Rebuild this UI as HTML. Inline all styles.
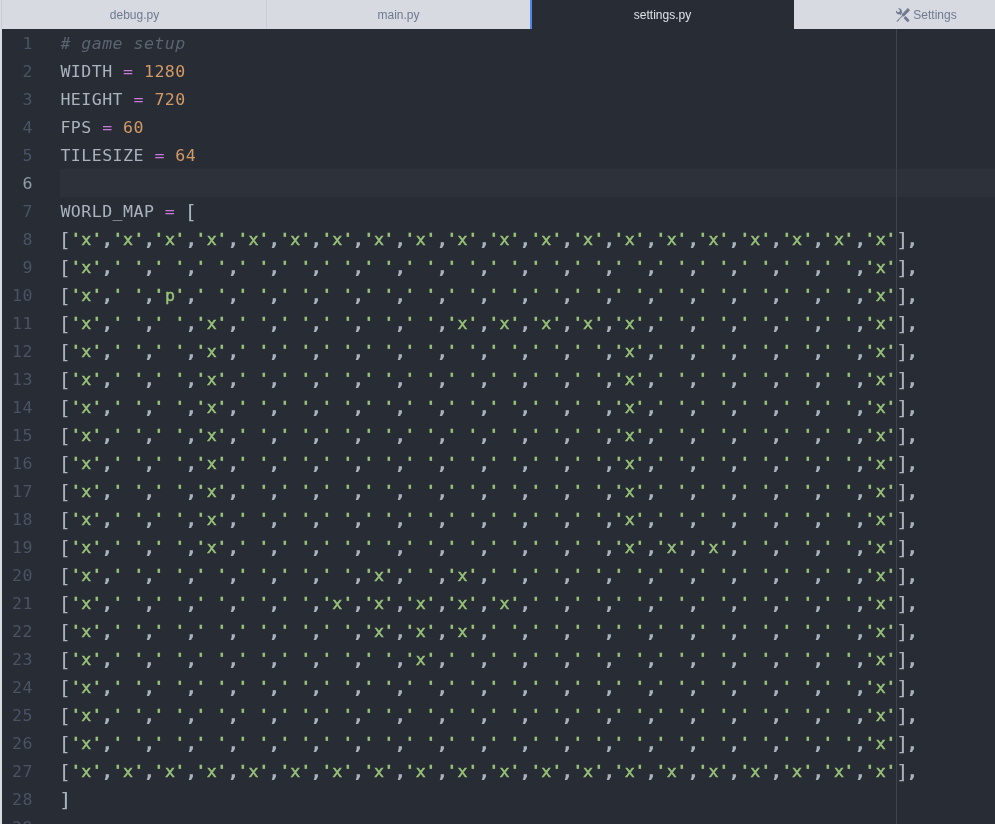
<!DOCTYPE html>
<html><head><meta charset="utf-8"><title>settings.py</title>
<style>
html,body{margin:0;padding:0;}
body{width:995px;height:824px;overflow:hidden;background:#282c34;position:relative;font-family:"Liberation Sans",sans-serif;}
#strip{position:absolute;left:0;top:0;width:2px;height:824px;background:#d9dce2;}
#strip:after{content:"";position:absolute;left:1px;top:0;width:1px;height:29px;background:#c9cdd5;}
#tabbg{position:absolute;left:2px;top:0;width:993px;height:29px;background:#d7dae0;}
#tabbg i{position:absolute;top:0;height:28px;width:1px;background:#c9cdd5;}
#tabbg b{position:absolute;left:528px;top:0;width:264px;height:29px;background:#282c34;border-left:2px solid #5085ee;box-sizing:border-box;}
#tabs{position:absolute;left:2px;top:0;width:993px;height:29px;overflow:hidden;font-size:12px;color:#6f7a90;will-change:transform;}
.tab{position:absolute;top:0;height:29px;width:264px;line-height:30px;text-align:center;box-sizing:border-box;padding-left:1px;white-space:nowrap;}
.tab.active{color:#dfe2e8;}
.tab svg{position:absolute;left:102.4px;top:8px;}
#ed{position:absolute;left:2px;top:30px;width:993px;height:794px;overflow:hidden;font-family:"DejaVu Sans Mono",monospace;font-size:16.6px;letter-spacing:0.452px;line-height:28px;color:#abb2bf;will-change:transform;}
#ed div{height:28px;position:relative;}
#hl{position:absolute;left:60px;top:169px;width:935px;height:28px;background:#2c313a;}
#ed .n{position:absolute;left:0;top:0;width:31px;text-align:right;color:#4b5263;-webkit-text-stroke:0;}
#ed div.cur .n{color:#959ca9;}
#ed .t{position:absolute;left:58.4px;top:0;white-space:pre;}
#ed i{color:#5c6370;font-style:italic;}
#ed b{color:#c678dd;font-weight:normal;}
#ed u{color:#d19a66;text-decoration:none;}
#ed s{color:#98c379;text-decoration:none;-webkit-text-stroke:0.8px;}
#ed s a{display:inline-block;transform:scale(1.12,0.78);transform-origin:50% 3.7px;}
#ed .k{display:inline-block;transform:translate(0.7px,1px) scale(1.25,1.17);transform-origin:80% 14px;}
#ed .j{display:inline-block;transform:translate(-0.5px,1px) scale(1.3,1.17);transform-origin:20% 14px;}
#ed s tt{font:inherit;-webkit-text-stroke:0.45px;}
#ed em{font-style:normal;font-weight:bold;-webkit-text-stroke:0.1px;display:inline-block;transform:translate(0.7px,1px) scale(1.22,1.05);transform-origin:68% 15px;}
#guide{position:absolute;left:896px;top:29px;width:1px;height:795px;background:#3e434d;}
</style></head>
<body>
<div id="tabbg"><i style="left:264px"></i><b></b></div>
<div id="tabs">
<div class="tab" style="left:0">debug.py</div>
<div class="tab" style="left:264px">main.py</div>
<div class="tab active" style="left:528px">settings.py</div>
<div class="tab" style="left:792px;padding-left:18px"><svg width="14" height="14" viewBox="0 0 16 16"><path fill="#6f7a90" fill-rule="evenodd" d="M4.48 7.27c.26.26 1.28 1.33 1.28 1.33l.56-.58-.88-.91 1.69-1.8s-.76-.74-.43-.45c.32-1.19.03-2.51-.87-3.44C4.93.5 3.66.2 2.52.51l1.93 2-.51 1.96-1.89.52-1.93-2C-.19 4.17.1 5.48 1 6.4c.94.98 2.29 1.26 3.48.87zm6.44 1.94l-2.33 2.3 3.84 3.98c.31.33.73.49 1.14.49.41 0 .82-.16 1.14-.49.63-.65.63-1.7 0-2.35l-3.79-3.930zM16 2.53L13.550 0 6.330 7.460l.88.91-4.310 4.460-.99.53-1.390 2.270.35.37 2.200-1.440.51-1.020L7.900 9.080l.88.91L16 2.530z"/></svg>Settings</div>
</div>
<div id="strip"></div>
<div id="hl"></div>
<div id="ed">
<div><span class="n">1</span><span class="t"><i># game setup</i></span></div>
<div><span class="n">2</span><span class="t">WIDTH <b>=</b> <u>1280</u></span></div>
<div><span class="n">3</span><span class="t">HEIGHT <b>=</b> <u>720</u></span></div>
<div><span class="n">4</span><span class="t">FPS <b>=</b> <u>60</u></span></div>
<div><span class="n">5</span><span class="t">TILESIZE <b>=</b> <u>64</u></span></div>
<div class="cur"><span class="n">6</span><span class="t"></span></div>
<div><span class="n">7</span><span class="t">WORLD_MAP <b>=</b> <span class="k">[</span></span></div>
<div><span class="n">8</span><span class="t"><span class="k">[</span><s><a>'</a><tt>x</tt><a>'</a></s><em>,</em><s><a>'</a><tt>x</tt><a>'</a></s><em>,</em><s><a>'</a><tt>x</tt><a>'</a></s><em>,</em><s><a>'</a><tt>x</tt><a>'</a></s><em>,</em><s><a>'</a><tt>x</tt><a>'</a></s><em>,</em><s><a>'</a><tt>x</tt><a>'</a></s><em>,</em><s><a>'</a><tt>x</tt><a>'</a></s><em>,</em><s><a>'</a><tt>x</tt><a>'</a></s><em>,</em><s><a>'</a><tt>x</tt><a>'</a></s><em>,</em><s><a>'</a><tt>x</tt><a>'</a></s><em>,</em><s><a>'</a><tt>x</tt><a>'</a></s><em>,</em><s><a>'</a><tt>x</tt><a>'</a></s><em>,</em><s><a>'</a><tt>x</tt><a>'</a></s><em>,</em><s><a>'</a><tt>x</tt><a>'</a></s><em>,</em><s><a>'</a><tt>x</tt><a>'</a></s><em>,</em><s><a>'</a><tt>x</tt><a>'</a></s><em>,</em><s><a>'</a><tt>x</tt><a>'</a></s><em>,</em><s><a>'</a><tt>x</tt><a>'</a></s><em>,</em><s><a>'</a><tt>x</tt><a>'</a></s><em>,</em><s><a>'</a><tt>x</tt><a>'</a></s><span class="j">]</span><em>,</em></span></div>
<div><span class="n">9</span><span class="t"><span class="k">[</span><s><a>'</a><tt>x</tt><a>'</a></s><em>,</em><s><a>'</a> <a>'</a></s><em>,</em><s><a>'</a> <a>'</a></s><em>,</em><s><a>'</a> <a>'</a></s><em>,</em><s><a>'</a> <a>'</a></s><em>,</em><s><a>'</a> <a>'</a></s><em>,</em><s><a>'</a> <a>'</a></s><em>,</em><s><a>'</a> <a>'</a></s><em>,</em><s><a>'</a> <a>'</a></s><em>,</em><s><a>'</a> <a>'</a></s><em>,</em><s><a>'</a> <a>'</a></s><em>,</em><s><a>'</a> <a>'</a></s><em>,</em><s><a>'</a> <a>'</a></s><em>,</em><s><a>'</a> <a>'</a></s><em>,</em><s><a>'</a> <a>'</a></s><em>,</em><s><a>'</a> <a>'</a></s><em>,</em><s><a>'</a> <a>'</a></s><em>,</em><s><a>'</a> <a>'</a></s><em>,</em><s><a>'</a> <a>'</a></s><em>,</em><s><a>'</a><tt>x</tt><a>'</a></s><span class="j">]</span><em>,</em></span></div>
<div><span class="n">10</span><span class="t"><span class="k">[</span><s><a>'</a><tt>x</tt><a>'</a></s><em>,</em><s><a>'</a> <a>'</a></s><em>,</em><s><a>'</a><tt>p</tt><a>'</a></s><em>,</em><s><a>'</a> <a>'</a></s><em>,</em><s><a>'</a> <a>'</a></s><em>,</em><s><a>'</a> <a>'</a></s><em>,</em><s><a>'</a> <a>'</a></s><em>,</em><s><a>'</a> <a>'</a></s><em>,</em><s><a>'</a> <a>'</a></s><em>,</em><s><a>'</a> <a>'</a></s><em>,</em><s><a>'</a> <a>'</a></s><em>,</em><s><a>'</a> <a>'</a></s><em>,</em><s><a>'</a> <a>'</a></s><em>,</em><s><a>'</a> <a>'</a></s><em>,</em><s><a>'</a> <a>'</a></s><em>,</em><s><a>'</a> <a>'</a></s><em>,</em><s><a>'</a> <a>'</a></s><em>,</em><s><a>'</a> <a>'</a></s><em>,</em><s><a>'</a> <a>'</a></s><em>,</em><s><a>'</a><tt>x</tt><a>'</a></s><span class="j">]</span><em>,</em></span></div>
<div><span class="n">11</span><span class="t"><span class="k">[</span><s><a>'</a><tt>x</tt><a>'</a></s><em>,</em><s><a>'</a> <a>'</a></s><em>,</em><s><a>'</a> <a>'</a></s><em>,</em><s><a>'</a><tt>x</tt><a>'</a></s><em>,</em><s><a>'</a> <a>'</a></s><em>,</em><s><a>'</a> <a>'</a></s><em>,</em><s><a>'</a> <a>'</a></s><em>,</em><s><a>'</a> <a>'</a></s><em>,</em><s><a>'</a> <a>'</a></s><em>,</em><s><a>'</a><tt>x</tt><a>'</a></s><em>,</em><s><a>'</a><tt>x</tt><a>'</a></s><em>,</em><s><a>'</a><tt>x</tt><a>'</a></s><em>,</em><s><a>'</a><tt>x</tt><a>'</a></s><em>,</em><s><a>'</a><tt>x</tt><a>'</a></s><em>,</em><s><a>'</a> <a>'</a></s><em>,</em><s><a>'</a> <a>'</a></s><em>,</em><s><a>'</a> <a>'</a></s><em>,</em><s><a>'</a> <a>'</a></s><em>,</em><s><a>'</a> <a>'</a></s><em>,</em><s><a>'</a><tt>x</tt><a>'</a></s><span class="j">]</span><em>,</em></span></div>
<div><span class="n">12</span><span class="t"><span class="k">[</span><s><a>'</a><tt>x</tt><a>'</a></s><em>,</em><s><a>'</a> <a>'</a></s><em>,</em><s><a>'</a> <a>'</a></s><em>,</em><s><a>'</a><tt>x</tt><a>'</a></s><em>,</em><s><a>'</a> <a>'</a></s><em>,</em><s><a>'</a> <a>'</a></s><em>,</em><s><a>'</a> <a>'</a></s><em>,</em><s><a>'</a> <a>'</a></s><em>,</em><s><a>'</a> <a>'</a></s><em>,</em><s><a>'</a> <a>'</a></s><em>,</em><s><a>'</a> <a>'</a></s><em>,</em><s><a>'</a> <a>'</a></s><em>,</em><s><a>'</a> <a>'</a></s><em>,</em><s><a>'</a><tt>x</tt><a>'</a></s><em>,</em><s><a>'</a> <a>'</a></s><em>,</em><s><a>'</a> <a>'</a></s><em>,</em><s><a>'</a> <a>'</a></s><em>,</em><s><a>'</a> <a>'</a></s><em>,</em><s><a>'</a> <a>'</a></s><em>,</em><s><a>'</a><tt>x</tt><a>'</a></s><span class="j">]</span><em>,</em></span></div>
<div><span class="n">13</span><span class="t"><span class="k">[</span><s><a>'</a><tt>x</tt><a>'</a></s><em>,</em><s><a>'</a> <a>'</a></s><em>,</em><s><a>'</a> <a>'</a></s><em>,</em><s><a>'</a><tt>x</tt><a>'</a></s><em>,</em><s><a>'</a> <a>'</a></s><em>,</em><s><a>'</a> <a>'</a></s><em>,</em><s><a>'</a> <a>'</a></s><em>,</em><s><a>'</a> <a>'</a></s><em>,</em><s><a>'</a> <a>'</a></s><em>,</em><s><a>'</a> <a>'</a></s><em>,</em><s><a>'</a> <a>'</a></s><em>,</em><s><a>'</a> <a>'</a></s><em>,</em><s><a>'</a> <a>'</a></s><em>,</em><s><a>'</a><tt>x</tt><a>'</a></s><em>,</em><s><a>'</a> <a>'</a></s><em>,</em><s><a>'</a> <a>'</a></s><em>,</em><s><a>'</a> <a>'</a></s><em>,</em><s><a>'</a> <a>'</a></s><em>,</em><s><a>'</a> <a>'</a></s><em>,</em><s><a>'</a><tt>x</tt><a>'</a></s><span class="j">]</span><em>,</em></span></div>
<div><span class="n">14</span><span class="t"><span class="k">[</span><s><a>'</a><tt>x</tt><a>'</a></s><em>,</em><s><a>'</a> <a>'</a></s><em>,</em><s><a>'</a> <a>'</a></s><em>,</em><s><a>'</a><tt>x</tt><a>'</a></s><em>,</em><s><a>'</a> <a>'</a></s><em>,</em><s><a>'</a> <a>'</a></s><em>,</em><s><a>'</a> <a>'</a></s><em>,</em><s><a>'</a> <a>'</a></s><em>,</em><s><a>'</a> <a>'</a></s><em>,</em><s><a>'</a> <a>'</a></s><em>,</em><s><a>'</a> <a>'</a></s><em>,</em><s><a>'</a> <a>'</a></s><em>,</em><s><a>'</a> <a>'</a></s><em>,</em><s><a>'</a><tt>x</tt><a>'</a></s><em>,</em><s><a>'</a> <a>'</a></s><em>,</em><s><a>'</a> <a>'</a></s><em>,</em><s><a>'</a> <a>'</a></s><em>,</em><s><a>'</a> <a>'</a></s><em>,</em><s><a>'</a> <a>'</a></s><em>,</em><s><a>'</a><tt>x</tt><a>'</a></s><span class="j">]</span><em>,</em></span></div>
<div><span class="n">15</span><span class="t"><span class="k">[</span><s><a>'</a><tt>x</tt><a>'</a></s><em>,</em><s><a>'</a> <a>'</a></s><em>,</em><s><a>'</a> <a>'</a></s><em>,</em><s><a>'</a><tt>x</tt><a>'</a></s><em>,</em><s><a>'</a> <a>'</a></s><em>,</em><s><a>'</a> <a>'</a></s><em>,</em><s><a>'</a> <a>'</a></s><em>,</em><s><a>'</a> <a>'</a></s><em>,</em><s><a>'</a> <a>'</a></s><em>,</em><s><a>'</a> <a>'</a></s><em>,</em><s><a>'</a> <a>'</a></s><em>,</em><s><a>'</a> <a>'</a></s><em>,</em><s><a>'</a> <a>'</a></s><em>,</em><s><a>'</a><tt>x</tt><a>'</a></s><em>,</em><s><a>'</a> <a>'</a></s><em>,</em><s><a>'</a> <a>'</a></s><em>,</em><s><a>'</a> <a>'</a></s><em>,</em><s><a>'</a> <a>'</a></s><em>,</em><s><a>'</a> <a>'</a></s><em>,</em><s><a>'</a><tt>x</tt><a>'</a></s><span class="j">]</span><em>,</em></span></div>
<div><span class="n">16</span><span class="t"><span class="k">[</span><s><a>'</a><tt>x</tt><a>'</a></s><em>,</em><s><a>'</a> <a>'</a></s><em>,</em><s><a>'</a> <a>'</a></s><em>,</em><s><a>'</a><tt>x</tt><a>'</a></s><em>,</em><s><a>'</a> <a>'</a></s><em>,</em><s><a>'</a> <a>'</a></s><em>,</em><s><a>'</a> <a>'</a></s><em>,</em><s><a>'</a> <a>'</a></s><em>,</em><s><a>'</a> <a>'</a></s><em>,</em><s><a>'</a> <a>'</a></s><em>,</em><s><a>'</a> <a>'</a></s><em>,</em><s><a>'</a> <a>'</a></s><em>,</em><s><a>'</a> <a>'</a></s><em>,</em><s><a>'</a><tt>x</tt><a>'</a></s><em>,</em><s><a>'</a> <a>'</a></s><em>,</em><s><a>'</a> <a>'</a></s><em>,</em><s><a>'</a> <a>'</a></s><em>,</em><s><a>'</a> <a>'</a></s><em>,</em><s><a>'</a> <a>'</a></s><em>,</em><s><a>'</a><tt>x</tt><a>'</a></s><span class="j">]</span><em>,</em></span></div>
<div><span class="n">17</span><span class="t"><span class="k">[</span><s><a>'</a><tt>x</tt><a>'</a></s><em>,</em><s><a>'</a> <a>'</a></s><em>,</em><s><a>'</a> <a>'</a></s><em>,</em><s><a>'</a><tt>x</tt><a>'</a></s><em>,</em><s><a>'</a> <a>'</a></s><em>,</em><s><a>'</a> <a>'</a></s><em>,</em><s><a>'</a> <a>'</a></s><em>,</em><s><a>'</a> <a>'</a></s><em>,</em><s><a>'</a> <a>'</a></s><em>,</em><s><a>'</a> <a>'</a></s><em>,</em><s><a>'</a> <a>'</a></s><em>,</em><s><a>'</a> <a>'</a></s><em>,</em><s><a>'</a> <a>'</a></s><em>,</em><s><a>'</a><tt>x</tt><a>'</a></s><em>,</em><s><a>'</a> <a>'</a></s><em>,</em><s><a>'</a> <a>'</a></s><em>,</em><s><a>'</a> <a>'</a></s><em>,</em><s><a>'</a> <a>'</a></s><em>,</em><s><a>'</a> <a>'</a></s><em>,</em><s><a>'</a><tt>x</tt><a>'</a></s><span class="j">]</span><em>,</em></span></div>
<div><span class="n">18</span><span class="t"><span class="k">[</span><s><a>'</a><tt>x</tt><a>'</a></s><em>,</em><s><a>'</a> <a>'</a></s><em>,</em><s><a>'</a> <a>'</a></s><em>,</em><s><a>'</a><tt>x</tt><a>'</a></s><em>,</em><s><a>'</a> <a>'</a></s><em>,</em><s><a>'</a> <a>'</a></s><em>,</em><s><a>'</a> <a>'</a></s><em>,</em><s><a>'</a> <a>'</a></s><em>,</em><s><a>'</a> <a>'</a></s><em>,</em><s><a>'</a> <a>'</a></s><em>,</em><s><a>'</a> <a>'</a></s><em>,</em><s><a>'</a> <a>'</a></s><em>,</em><s><a>'</a> <a>'</a></s><em>,</em><s><a>'</a><tt>x</tt><a>'</a></s><em>,</em><s><a>'</a> <a>'</a></s><em>,</em><s><a>'</a> <a>'</a></s><em>,</em><s><a>'</a> <a>'</a></s><em>,</em><s><a>'</a> <a>'</a></s><em>,</em><s><a>'</a> <a>'</a></s><em>,</em><s><a>'</a><tt>x</tt><a>'</a></s><span class="j">]</span><em>,</em></span></div>
<div><span class="n">19</span><span class="t"><span class="k">[</span><s><a>'</a><tt>x</tt><a>'</a></s><em>,</em><s><a>'</a> <a>'</a></s><em>,</em><s><a>'</a> <a>'</a></s><em>,</em><s><a>'</a><tt>x</tt><a>'</a></s><em>,</em><s><a>'</a> <a>'</a></s><em>,</em><s><a>'</a> <a>'</a></s><em>,</em><s><a>'</a> <a>'</a></s><em>,</em><s><a>'</a> <a>'</a></s><em>,</em><s><a>'</a> <a>'</a></s><em>,</em><s><a>'</a> <a>'</a></s><em>,</em><s><a>'</a> <a>'</a></s><em>,</em><s><a>'</a> <a>'</a></s><em>,</em><s><a>'</a> <a>'</a></s><em>,</em><s><a>'</a><tt>x</tt><a>'</a></s><em>,</em><s><a>'</a><tt>x</tt><a>'</a></s><em>,</em><s><a>'</a><tt>x</tt><a>'</a></s><em>,</em><s><a>'</a> <a>'</a></s><em>,</em><s><a>'</a> <a>'</a></s><em>,</em><s><a>'</a> <a>'</a></s><em>,</em><s><a>'</a><tt>x</tt><a>'</a></s><span class="j">]</span><em>,</em></span></div>
<div><span class="n">20</span><span class="t"><span class="k">[</span><s><a>'</a><tt>x</tt><a>'</a></s><em>,</em><s><a>'</a> <a>'</a></s><em>,</em><s><a>'</a> <a>'</a></s><em>,</em><s><a>'</a> <a>'</a></s><em>,</em><s><a>'</a> <a>'</a></s><em>,</em><s><a>'</a> <a>'</a></s><em>,</em><s><a>'</a> <a>'</a></s><em>,</em><s><a>'</a><tt>x</tt><a>'</a></s><em>,</em><s><a>'</a> <a>'</a></s><em>,</em><s><a>'</a><tt>x</tt><a>'</a></s><em>,</em><s><a>'</a> <a>'</a></s><em>,</em><s><a>'</a> <a>'</a></s><em>,</em><s><a>'</a> <a>'</a></s><em>,</em><s><a>'</a> <a>'</a></s><em>,</em><s><a>'</a> <a>'</a></s><em>,</em><s><a>'</a> <a>'</a></s><em>,</em><s><a>'</a> <a>'</a></s><em>,</em><s><a>'</a> <a>'</a></s><em>,</em><s><a>'</a> <a>'</a></s><em>,</em><s><a>'</a><tt>x</tt><a>'</a></s><span class="j">]</span><em>,</em></span></div>
<div><span class="n">21</span><span class="t"><span class="k">[</span><s><a>'</a><tt>x</tt><a>'</a></s><em>,</em><s><a>'</a> <a>'</a></s><em>,</em><s><a>'</a> <a>'</a></s><em>,</em><s><a>'</a> <a>'</a></s><em>,</em><s><a>'</a> <a>'</a></s><em>,</em><s><a>'</a> <a>'</a></s><em>,</em><s><a>'</a><tt>x</tt><a>'</a></s><em>,</em><s><a>'</a><tt>x</tt><a>'</a></s><em>,</em><s><a>'</a><tt>x</tt><a>'</a></s><em>,</em><s><a>'</a><tt>x</tt><a>'</a></s><em>,</em><s><a>'</a><tt>x</tt><a>'</a></s><em>,</em><s><a>'</a> <a>'</a></s><em>,</em><s><a>'</a> <a>'</a></s><em>,</em><s><a>'</a> <a>'</a></s><em>,</em><s><a>'</a> <a>'</a></s><em>,</em><s><a>'</a> <a>'</a></s><em>,</em><s><a>'</a> <a>'</a></s><em>,</em><s><a>'</a> <a>'</a></s><em>,</em><s><a>'</a> <a>'</a></s><em>,</em><s><a>'</a><tt>x</tt><a>'</a></s><span class="j">]</span><em>,</em></span></div>
<div><span class="n">22</span><span class="t"><span class="k">[</span><s><a>'</a><tt>x</tt><a>'</a></s><em>,</em><s><a>'</a> <a>'</a></s><em>,</em><s><a>'</a> <a>'</a></s><em>,</em><s><a>'</a> <a>'</a></s><em>,</em><s><a>'</a> <a>'</a></s><em>,</em><s><a>'</a> <a>'</a></s><em>,</em><s><a>'</a> <a>'</a></s><em>,</em><s><a>'</a><tt>x</tt><a>'</a></s><em>,</em><s><a>'</a><tt>x</tt><a>'</a></s><em>,</em><s><a>'</a><tt>x</tt><a>'</a></s><em>,</em><s><a>'</a> <a>'</a></s><em>,</em><s><a>'</a> <a>'</a></s><em>,</em><s><a>'</a> <a>'</a></s><em>,</em><s><a>'</a> <a>'</a></s><em>,</em><s><a>'</a> <a>'</a></s><em>,</em><s><a>'</a> <a>'</a></s><em>,</em><s><a>'</a> <a>'</a></s><em>,</em><s><a>'</a> <a>'</a></s><em>,</em><s><a>'</a> <a>'</a></s><em>,</em><s><a>'</a><tt>x</tt><a>'</a></s><span class="j">]</span><em>,</em></span></div>
<div><span class="n">23</span><span class="t"><span class="k">[</span><s><a>'</a><tt>x</tt><a>'</a></s><em>,</em><s><a>'</a> <a>'</a></s><em>,</em><s><a>'</a> <a>'</a></s><em>,</em><s><a>'</a> <a>'</a></s><em>,</em><s><a>'</a> <a>'</a></s><em>,</em><s><a>'</a> <a>'</a></s><em>,</em><s><a>'</a> <a>'</a></s><em>,</em><s><a>'</a> <a>'</a></s><em>,</em><s><a>'</a><tt>x</tt><a>'</a></s><em>,</em><s><a>'</a> <a>'</a></s><em>,</em><s><a>'</a> <a>'</a></s><em>,</em><s><a>'</a> <a>'</a></s><em>,</em><s><a>'</a> <a>'</a></s><em>,</em><s><a>'</a> <a>'</a></s><em>,</em><s><a>'</a> <a>'</a></s><em>,</em><s><a>'</a> <a>'</a></s><em>,</em><s><a>'</a> <a>'</a></s><em>,</em><s><a>'</a> <a>'</a></s><em>,</em><s><a>'</a> <a>'</a></s><em>,</em><s><a>'</a><tt>x</tt><a>'</a></s><span class="j">]</span><em>,</em></span></div>
<div><span class="n">24</span><span class="t"><span class="k">[</span><s><a>'</a><tt>x</tt><a>'</a></s><em>,</em><s><a>'</a> <a>'</a></s><em>,</em><s><a>'</a> <a>'</a></s><em>,</em><s><a>'</a> <a>'</a></s><em>,</em><s><a>'</a> <a>'</a></s><em>,</em><s><a>'</a> <a>'</a></s><em>,</em><s><a>'</a> <a>'</a></s><em>,</em><s><a>'</a> <a>'</a></s><em>,</em><s><a>'</a> <a>'</a></s><em>,</em><s><a>'</a> <a>'</a></s><em>,</em><s><a>'</a> <a>'</a></s><em>,</em><s><a>'</a> <a>'</a></s><em>,</em><s><a>'</a> <a>'</a></s><em>,</em><s><a>'</a> <a>'</a></s><em>,</em><s><a>'</a> <a>'</a></s><em>,</em><s><a>'</a> <a>'</a></s><em>,</em><s><a>'</a> <a>'</a></s><em>,</em><s><a>'</a> <a>'</a></s><em>,</em><s><a>'</a> <a>'</a></s><em>,</em><s><a>'</a><tt>x</tt><a>'</a></s><span class="j">]</span><em>,</em></span></div>
<div><span class="n">25</span><span class="t"><span class="k">[</span><s><a>'</a><tt>x</tt><a>'</a></s><em>,</em><s><a>'</a> <a>'</a></s><em>,</em><s><a>'</a> <a>'</a></s><em>,</em><s><a>'</a> <a>'</a></s><em>,</em><s><a>'</a> <a>'</a></s><em>,</em><s><a>'</a> <a>'</a></s><em>,</em><s><a>'</a> <a>'</a></s><em>,</em><s><a>'</a> <a>'</a></s><em>,</em><s><a>'</a> <a>'</a></s><em>,</em><s><a>'</a> <a>'</a></s><em>,</em><s><a>'</a> <a>'</a></s><em>,</em><s><a>'</a> <a>'</a></s><em>,</em><s><a>'</a> <a>'</a></s><em>,</em><s><a>'</a> <a>'</a></s><em>,</em><s><a>'</a> <a>'</a></s><em>,</em><s><a>'</a> <a>'</a></s><em>,</em><s><a>'</a> <a>'</a></s><em>,</em><s><a>'</a> <a>'</a></s><em>,</em><s><a>'</a> <a>'</a></s><em>,</em><s><a>'</a><tt>x</tt><a>'</a></s><span class="j">]</span><em>,</em></span></div>
<div><span class="n">26</span><span class="t"><span class="k">[</span><s><a>'</a><tt>x</tt><a>'</a></s><em>,</em><s><a>'</a> <a>'</a></s><em>,</em><s><a>'</a> <a>'</a></s><em>,</em><s><a>'</a> <a>'</a></s><em>,</em><s><a>'</a> <a>'</a></s><em>,</em><s><a>'</a> <a>'</a></s><em>,</em><s><a>'</a> <a>'</a></s><em>,</em><s><a>'</a> <a>'</a></s><em>,</em><s><a>'</a> <a>'</a></s><em>,</em><s><a>'</a> <a>'</a></s><em>,</em><s><a>'</a> <a>'</a></s><em>,</em><s><a>'</a> <a>'</a></s><em>,</em><s><a>'</a> <a>'</a></s><em>,</em><s><a>'</a> <a>'</a></s><em>,</em><s><a>'</a> <a>'</a></s><em>,</em><s><a>'</a> <a>'</a></s><em>,</em><s><a>'</a> <a>'</a></s><em>,</em><s><a>'</a> <a>'</a></s><em>,</em><s><a>'</a> <a>'</a></s><em>,</em><s><a>'</a><tt>x</tt><a>'</a></s><span class="j">]</span><em>,</em></span></div>
<div><span class="n">27</span><span class="t"><span class="k">[</span><s><a>'</a><tt>x</tt><a>'</a></s><em>,</em><s><a>'</a><tt>x</tt><a>'</a></s><em>,</em><s><a>'</a><tt>x</tt><a>'</a></s><em>,</em><s><a>'</a><tt>x</tt><a>'</a></s><em>,</em><s><a>'</a><tt>x</tt><a>'</a></s><em>,</em><s><a>'</a><tt>x</tt><a>'</a></s><em>,</em><s><a>'</a><tt>x</tt><a>'</a></s><em>,</em><s><a>'</a><tt>x</tt><a>'</a></s><em>,</em><s><a>'</a><tt>x</tt><a>'</a></s><em>,</em><s><a>'</a><tt>x</tt><a>'</a></s><em>,</em><s><a>'</a><tt>x</tt><a>'</a></s><em>,</em><s><a>'</a><tt>x</tt><a>'</a></s><em>,</em><s><a>'</a><tt>x</tt><a>'</a></s><em>,</em><s><a>'</a><tt>x</tt><a>'</a></s><em>,</em><s><a>'</a><tt>x</tt><a>'</a></s><em>,</em><s><a>'</a><tt>x</tt><a>'</a></s><em>,</em><s><a>'</a><tt>x</tt><a>'</a></s><em>,</em><s><a>'</a><tt>x</tt><a>'</a></s><em>,</em><s><a>'</a><tt>x</tt><a>'</a></s><em>,</em><s><a>'</a><tt>x</tt><a>'</a></s><span class="j">]</span><em>,</em></span></div>
<div><span class="n">28</span><span class="t"><span class="j">]</span></span></div>
<div><span class="n">29</span><span class="t"></span></div>
</div>
<div id="guide"></div>
</body></html>
